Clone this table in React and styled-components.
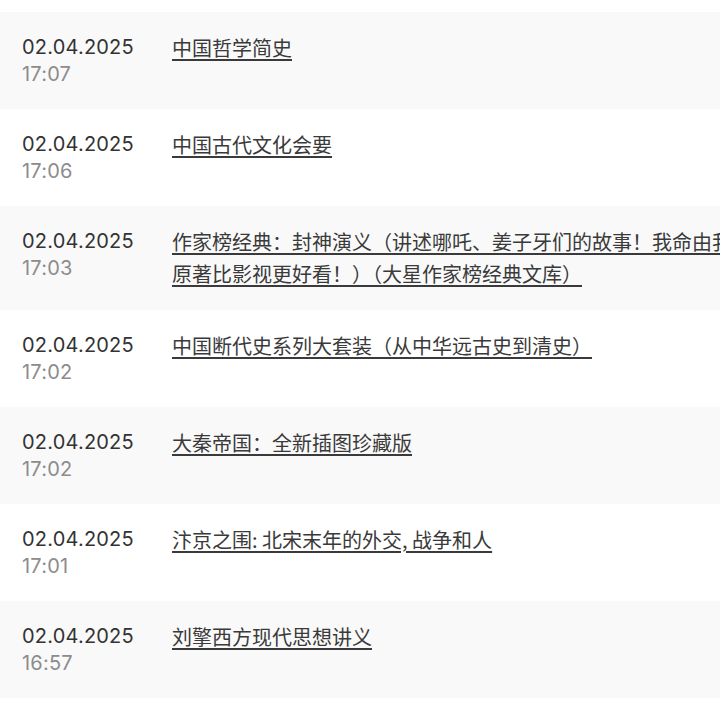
import styled, { createGlobalStyle } from "styled-components";

const GlobalStyle = createGlobalStyle`
  html, body {
    margin: 0;
    padding: 0;
    background: #fff;
    overflow: hidden;
  }
`;

const History = styled.div`
  box-sizing: border-box;
  width: 860px;
  padding-top: 12px;
  display: flex;
  flex-direction: column;
`;

const Row = styled.div`
  box-sizing: border-box;
  display: flex;
  align-items: flex-start;
  padding: 21px 22px 22px;
  background: ${(props) => (props.$shaded ? "#f9f9f9" : "#ffffff")};
`;

const Stamp = styled.div`
  flex: 0 0 150px;
  display: flex;
  flex-direction: column;
  font-family: Inter, "Noto Sans", sans-serif;
  font-size: 20px;
  letter-spacing: 0.2px;

  .date {
    color: #333333;
    line-height: 28px;
  }

  .time {
    color: #8c8c8c;
    line-height: 26px;
  }
`;

const Title = styled.a`
  width: 650px;
  margin: -1px 0 -2px;
  font-family: "Noto Sans CJK SC", "Noto Sans", sans-serif;
  font-size: 20px;
  line-height: 32px;
  color: #3a3a3a;
  text-decoration: underline;
  text-decoration-thickness: 1.5px;
  text-underline-offset: 3px;
  cursor: pointer;
`;

const items = [
  { date: "02.04.2025", time: "17:07", title: "中国哲学简史" },
  { date: "02.04.2025", time: "17:06", title: "中国古代文化会要" },
  {
    date: "02.04.2025",
    time: "17:03",
    title:
      "作家榜经典：封神演义（讲述哪吒、姜子牙们的故事！我命由我不由天！原著比影视更好看！）（大星作家榜经典文库）",
  },
  { date: "02.04.2025", time: "17:02", title: "中国断代史系列大套装（从中华远古史到清史）" },
  { date: "02.04.2025", time: "17:02", title: "大秦帝国：全新插图珍藏版" },
  { date: "02.04.2025", time: "17:01", title: "汴京之围: 北宋末年的外交, 战争和人" },
  { date: "02.04.2025", time: "16:57", title: "刘擎西方现代思想讲义" },
];

const App = () => (
  <>
    <GlobalStyle />
    <History>
      {items.map((item, i) => (
        <Row key={i} $shaded={i % 2 === 0}>
          <Stamp>
            <span className="date">{item.date}</span>
            <span className="time">{item.time}</span>
          </Stamp>
          <Title>{item.title}</Title>
        </Row>
      ))}
    </History>
  </>
);

export default App;
